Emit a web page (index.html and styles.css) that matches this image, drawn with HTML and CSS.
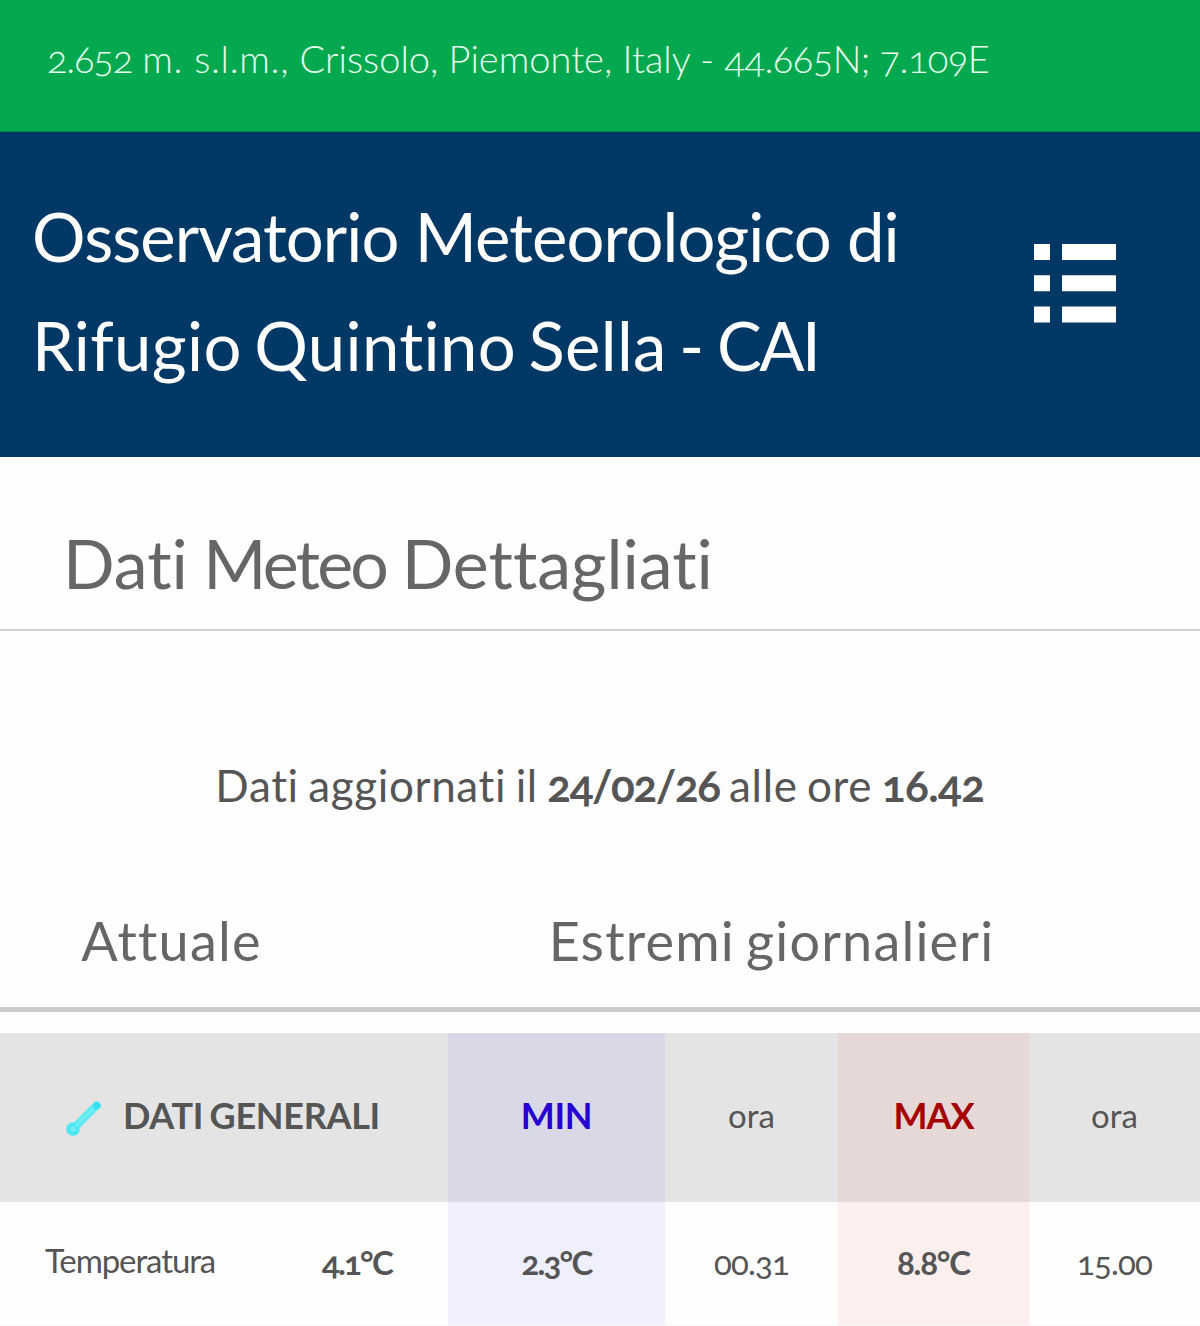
FILE: index.html
```html
<!DOCTYPE html>
<html lang="it">
<head>
<meta charset="utf-8">
<title>Osservatorio Meteorologico di Rifugio Quintino Sella - CAI</title>
<link rel="stylesheet" href="styles.css">
</head>
<body>
<div class="location"><span class="num">2.652</span> <span class="unit">m. s.l.m.,</span> Crissolo, Piemonte, Italy - <span class="coord">44.665N; 7.109E</span></div>
<header class="site-header">
  <h1 class="site-title"><span class="line line-first">Osservatorio Meteorologico di</span><span class="line line-second">Rifugio Quintino Sella - <span class="acronym">CAI</span></span></h1>
  <svg class="menu" viewBox="0 0 82 79" width="82" height="79" fill="#fff" role="img" aria-label="Menu">
    <path d="M0 0h16v16H0zM28 0h54v16H28zM0 31.300h16v16H0zM28 31.300h54v16H28zM0 62.500h16v16H0zM28 62.500h54v16H28z"/>
  </svg>
</header>
<main>
  <h2 class="page-title">Dati <span class="tight">Meteo</span> Dettagliati</h2>
  <p class="updated">Dati aggiornati il <b>24/02/26</b> alle ore <b class="time">16.42</b></p>
  <div class="groups"><h3>Attuale</h3><h3>Estremi giornalieri</h3></div>
  <div class="row head">
    <div class="cell section">
      <svg class="thermo" viewBox="0 0 38 38" width="38" height="38">
        <path d="M8.500 29.500L31.500 6.500" stroke="#5cebf2" stroke-width="8" stroke-linecap="round"/>
        <circle cx="8" cy="30" r="6.800" fill="#4fe8f2"/>
        <path d="M11 27L28 10" stroke="#76eef3" stroke-width="2.500" stroke-dasharray="3 1"/>
        <circle cx="32" cy="6.500" r="3.500" fill="#30e2ee"/>
        <circle cx="8" cy="30" r="2.500" fill="#76eef3"/>
      </svg>
      <b>DATI GENERALI</b>
    </div>
    <div class="cell min"><b>MIN</b></div>
    <div class="cell hour">ora</div>
    <div class="cell max"><b>MAX</b></div>
    <div class="cell hour">ora</div>
  </div>
  <div class="row data">
    <div class="cell current"><span class="label">Temperatura</span><b class="value">4.1°C</b></div>
    <div class="cell min"><b class="value">2.3°C</b></div>
    <div class="cell"><span class="value clock">00.31</span></div>
    <div class="cell max"><b class="value wide">8.8°C</b></div>
    <div class="cell"><span class="value clock">15.00</span></div>
  </div>
</main>
</body>
</html>
```
FILE: styles.css
```css
* { box-sizing: border-box; }
body {
  margin: 0;
  height: 1326px;
  overflow: hidden;
  background: #fefefe;
  color: #555;
  font-family: Lato, "Open Sans", sans-serif;
  font-variant-numeric: oldstyle-nums;
  font-variant-ligatures: none;
  white-space: nowrap;
}
h1, h2, h3, p { margin: 0; font-weight: 400; }

.location {
  height: 132px;
  padding: 28px 0 0 47px;
  background: #04a84e;
  border-bottom: 1px solid #078a50;
  color: #e6fff0;
  font-size: 38px;
  font-weight: 300;
  line-height: 60px;
}
.num { letter-spacing: -1.2px; }
.unit { letter-spacing: .7px; }
.coord { letter-spacing: -.55px; }

.site-header {
  display: flex;
  justify-content: space-between;
  height: 325px;
  padding: 50px 84px 0 32px;
  background: #023865;
  color: #fff;
}
.site-title { font-size: 67px; line-height: 109px; }
.line { display: block; }
.line-first { letter-spacing: -.95px; }
.line-second { letter-spacing: .35px; word-spacing: -5px; }
.acronym { letter-spacing: -2.5px; }
.menu { margin-top: 62px; }

.page-title {
  height: 174px;
  padding: 66px 0 0 63px;
  border-bottom: 2px solid #d0d0d0;
  color: #666;
  font-size: 68px;
  line-height: 80px;
  word-spacing: -2px;
}
.tight { letter-spacing: -2.7px; }

.updated {
  padding-top: 124px;
  font-size: 44px;
  line-height: 60px;
  letter-spacing: .65px;
  word-spacing: -2.5px;
  text-align: center;
}
.updated b { letter-spacing: -1.4px; }
.updated .time { letter-spacing: -.5px; }

.groups {
  display: grid;
  grid-template-columns: 343px 857px;
  height: 107px;
  margin: 90px 0 21px;
  border-bottom: 5px solid #ccc;
  color: #666;
  text-align: center;
}
.groups h3 {
  font-size: 54px;
  line-height: 72px;
  letter-spacing: 1.2px;
  word-spacing: -4px;
}

.row {
  display: grid;
  grid-template-columns: 448px 217px 173px 191px 171px;
  font-size: 33px;
  line-height: 40px;
  text-align: center;
}
.head { height: 169px; background: #e4e4e4; }
.head .cell { padding-top: 62px; }
.head b { font-size: 36px; letter-spacing: -.3px; }
.head .section { display: flex; gap: 20px; padding-left: 65px; }
.head .section b { word-spacing: -2px; }
.head .min { background: #d8d8e6; color: #2500d0; }
.head .max { background: #e5d8d7; color: #a50000; }
.head .max b { letter-spacing: -1px; }
.thermo { fill: none; margin-top: 4px; }

.data { height: 124px; border-bottom: 1px solid #f7f7f7; }
.data .cell { padding-top: 40px; }
.data .min { background: #efeffe; }
.data .max { background: #fdefee; }
.data .current {
  display: flex;
  justify-content: space-between;
  padding: 38px 56px 0 45px;
}
.label { letter-spacing: -1.1px; }
.value { letter-spacing: -1.8px; }
.current .value { padding-top: 2px; }
.wide { letter-spacing: -1.2px; }
.clock { letter-spacing: -.8px; }
```
